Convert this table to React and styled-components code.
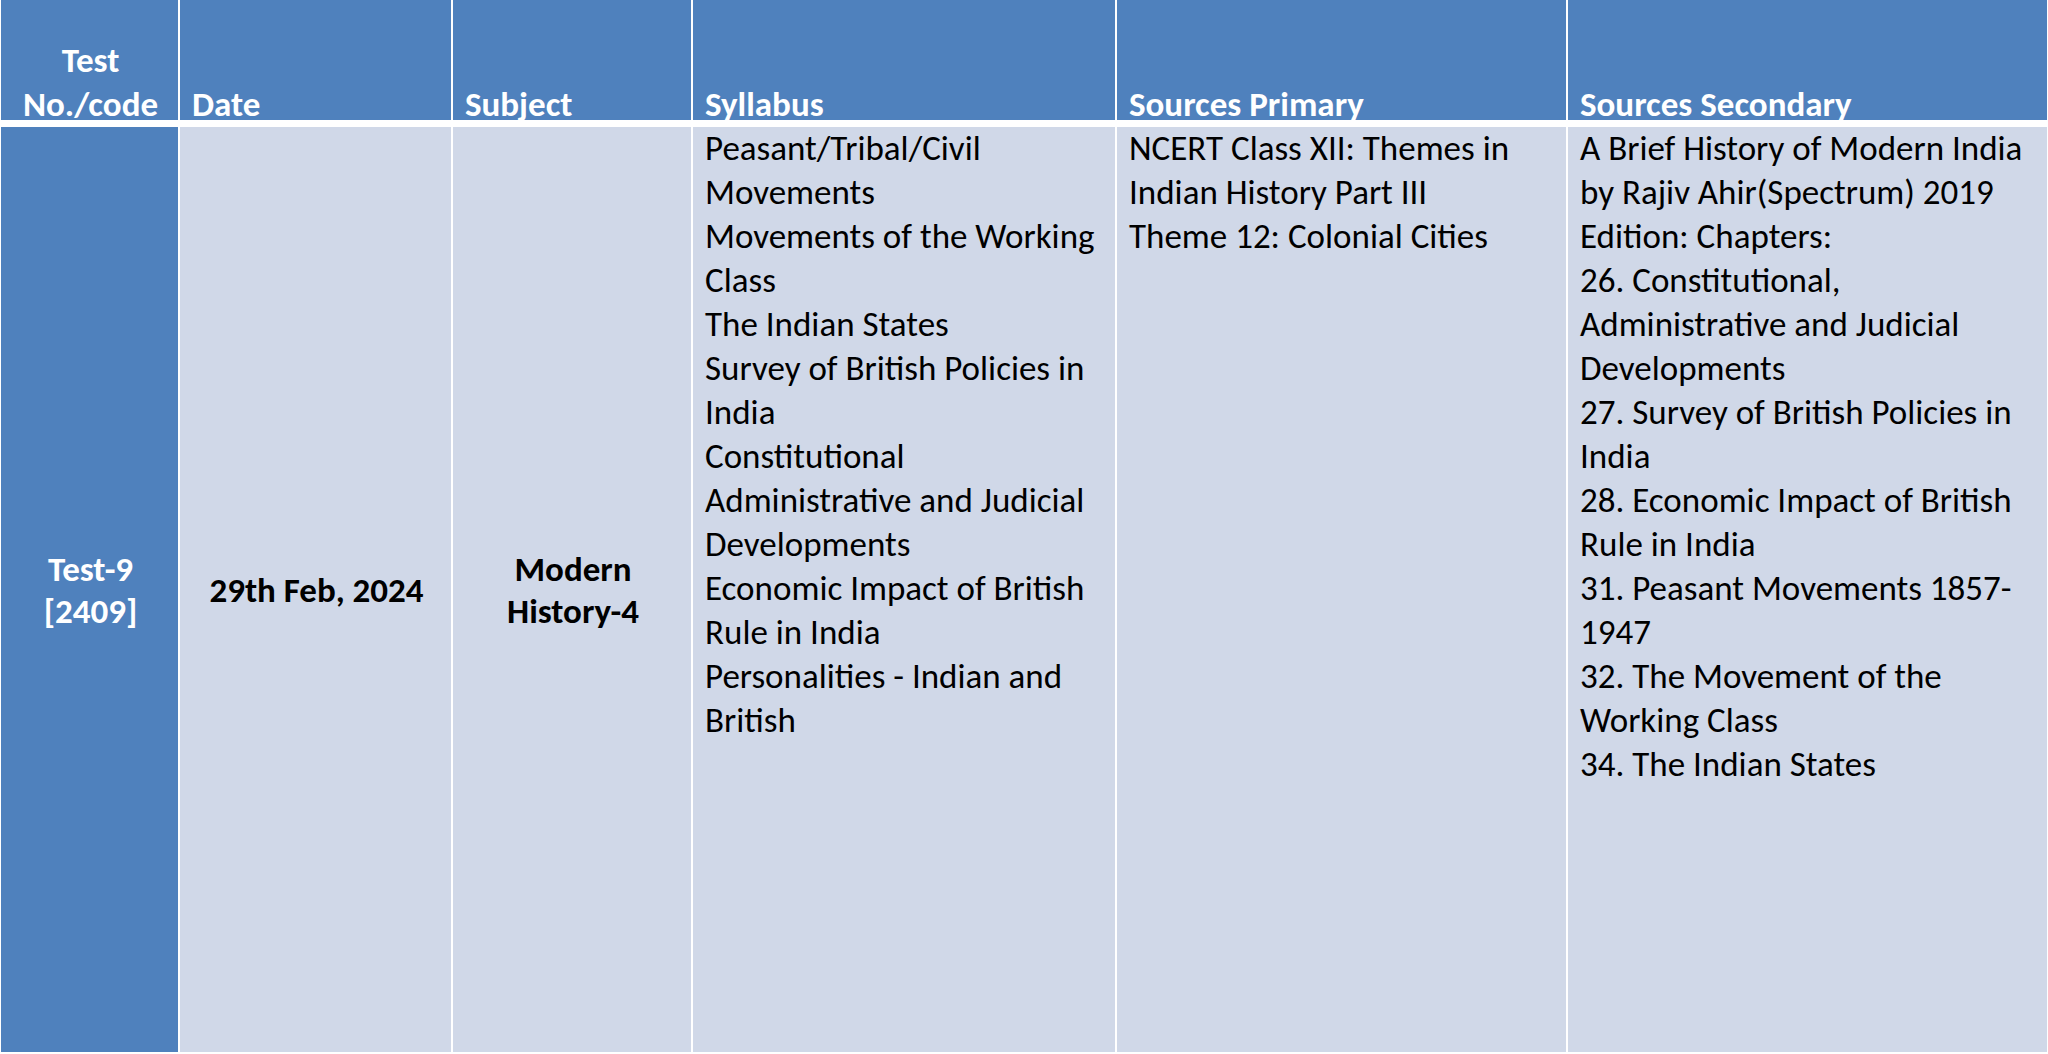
import React from "react";
import styled, { createGlobalStyle } from "styled-components";

const BLUE = "#4f81bd";
const PALE = "#d0d8e8";

const GlobalStyle = createGlobalStyle`
  html, body {
    margin: 0;
    padding: 0;
    background: #ffffff;
    overflow: hidden;
  }
  body {
    font-family: Calibri, Carlito, "Open Sans", "Liberation Sans", sans-serif;
  }
`;

const columns = [
  { key: "code", title: "Test\nNo./code", width: 177, center: true },
  { key: "date", title: "Date", width: 271 },
  { key: "subject", title: "Subject", width: 238 },
  { key: "syllabus", title: "Syllabus", width: 422 },
  { key: "primary", title: "Sources Primary", width: 449 },
  { key: "secondary", title: "Sources Secondary", width: 479 },
];

const syllabus = [
  "Peasant/Tribal/Civil\nMovements",
  "Movements of the Working\nClass",
  "The Indian States",
  "Survey of British Policies in\nIndia",
  "Constitutional\nAdministrative and Judicial\nDevelopments",
  "Economic Impact of British\nRule in India",
  "Personalities - Indian and\nBritish",
];

const primary = [
  "NCERT Class XII: Themes in\nIndian History Part III",
  "Theme 12: Colonial Cities",
];

const secondary = [
  "A Brief History of Modern India\nby Rajiv Ahir(Spectrum) 2019\nEdition: Chapters:",
  "26. Constitutional,\nAdministrative and Judicial\nDevelopments",
  "27. Survey of British Policies in\nIndia",
  "28. Economic Impact of British\nRule in India",
  "31. Peasant Movements 1857-\n1947",
  "32. The Movement of the\nWorking Class",
  "34. The Indian States",
];

function App() {
  return (
    <>
      <GlobalStyle />
      <Page>
        <Table>
          <colgroup>
            {columns.map((c) => (
              <col key={c.key} style={{ width: c.width }} />
            ))}
          </colgroup>
          <thead>
            <tr>
              {columns.map((c) => (
                <HeadCell key={c.key} $center={c.center}>
                  <HeadLabel>{c.title}</HeadLabel>
                </HeadCell>
              ))}
            </tr>
          </thead>
          <tbody>
            <tr>
              <CodeCell>
                <BoldText>{"Test-9\n[2409]"}</BoldText>
              </CodeCell>
              <MiddleCell>
                <BoldText>29th Feb, 2024</BoldText>
              </MiddleCell>
              <MiddleCell>
                <BoldText>{"Modern\nHistory-4"}</BoldText>
              </MiddleCell>
              <ListCell>
                <ItemList items={syllabus} />
              </ListCell>
              <ListCell>
                <ItemList items={primary} />
              </ListCell>
              <ListCell>
                <ItemList items={secondary} />
              </ListCell>
            </tr>
          </tbody>
        </Table>
      </Page>
    </>
  );
}

function ItemList({ items }) {
  return (
    <Items>
      {items.map((item) => (
        <Item key={item}>{item}</Item>
      ))}
    </Items>
  );
}

export default App;

const Page = styled.div`
  width: 2048px;
  height: 1054px;
  overflow: hidden;
  background: #ffffff;
`;

const Table = styled.table`
  table-layout: fixed;
  border-collapse: separate;
  border-spacing: 2px 0;
  width: 2050px;
  margin: 0 0 0 -1px;
  font-size: 35px;
  line-height: 44px;
`;

const HeadCell = styled.th`
  height: 120px;
  padding: 0 10px 0 12px;
  background: ${BLUE};
  border-bottom: 7px solid #ffffff;
  color: #ffffff;
  font-weight: 700;
  text-align: ${({ $center }) => ($center ? "center" : "left")};
  vertical-align: bottom;
  white-space: pre;
`;

const HeadLabel = styled.div`
  margin-bottom: -6px;
`;

const BodyCell = styled.td`
  height: 925px;
  padding: 0 10px 0 12px;
  background: ${PALE};
  color: #000000;
`;

const CodeCell = styled(BodyCell)`
  background: ${BLUE};
  color: #ffffff;
  text-align: center;
  vertical-align: middle;
`;

const MiddleCell = styled(BodyCell)`
  text-align: center;
  vertical-align: middle;
`;

const ListCell = styled(BodyCell)`
  vertical-align: top;
`;

const BoldText = styled.div`
  font-weight: 700;
  white-space: pre;
  line-height: 42px;
`;

const Items = styled.div`
  margin-top: -1px;
  display: flex;
  flex-direction: column;
`;

const Item = styled.div`
  white-space: pre;
  font-weight: 400;
`;
